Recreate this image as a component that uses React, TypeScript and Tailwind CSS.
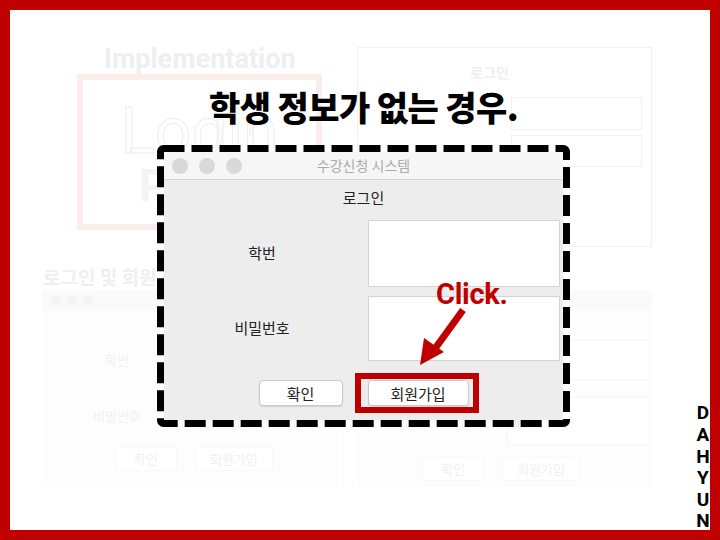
import React from "react";

const KR = "font-['Noto_Sans_CJK_KR','Noto_Sans',sans-serif]";

function FaintWindow({ variant }: { variant: "left" | "right" }) {
  return (
    <div className="flex h-full w-full flex-col bg-[#fdfdfd]">
      <div className="flex h-[20px] items-center gap-[6px] bg-[#fafafa] px-[8px]">
        <span className="h-[10px] w-[10px] rounded-full bg-[#f4f4f4]" />
        <span className="h-[10px] w-[10px] rounded-full bg-[#f4f4f4]" />
        <span className="h-[10px] w-[10px] rounded-full bg-[#f4f4f4]" />
      </div>
      {variant === "left" ? (
        <div className="flex flex-1 flex-col items-start pl-[50px] pt-[40px] text-[13px] text-[#f0f0f0]">
          <span className="ml-[12px]">학번</span>
          <span className="mt-[36px]">비밀번호</span>
          <div className="mt-[22px] ml-[22px] flex gap-[18px]">
            <span className="rounded-[3px] border border-[#f8f8f8] bg-white px-[18px] py-[1px]">확인</span>
            <span className="rounded-[3px] border border-[#f8f8f8] bg-white px-[14px] py-[1px]">회원가입</span>
          </div>
        </div>
      ) : (
        <div className="flex flex-1 flex-col items-end pr-[2px] pt-[30px] text-[13px] text-[#f0f0f0]">
          <div className="flex h-[40px] w-[143px] items-center border border-[#f6f6f6] bg-white pl-[4px]">6</div>
          <div className="mt-[17px] flex h-[48px] w-[143px] items-center border border-[#f6f6f6] bg-white pl-[4px]">●●|</div>
          <div className="mt-[12px] mr-[70px] flex gap-[18px]">
            <span className="rounded-[3px] border border-[#f8f8f8] bg-white px-[18px] py-[1px]">확인</span>
            <span className="rounded-[3px] border border-[#f8f8f8] bg-white px-[14px] py-[1px]">회원가입</span>
          </div>
        </div>
      )}
    </div>
  );
}

function Background() {
  return (
    <>
      <div className="absolute left-[94px] top-[36px] font-['Roboto',sans-serif] text-[27px] font-bold leading-none text-[#efefef]">
        Implementation
      </div>
      <div className="absolute left-[67px] top-[64px] flex h-[156px] w-[245px] flex-col items-center border-[6px] border-[#fcecec] pt-[20px]">
        <span
          className="font-['Roboto',sans-serif] text-[64px] leading-none text-white"
          style={{ WebkitTextStroke: "1px #eeeeee" }}
        >
          Login
        </span>
        <span className="self-start pl-[56px] font-['Roboto',sans-serif] text-[44px] font-bold leading-none text-[#f4f4f4]">
          P
        </span>
      </div>
      <div className={`absolute left-[347px] top-[37px] flex h-[200px] w-[295px] flex-col items-center border border-[#f1f1f1] ${KR}`}>
        <span className="mt-[14px] ml-[-30px] text-[14px] font-bold text-[#efefef]">로그인</span>
        <div className="mt-[14px] ml-[143px] h-[33px] w-[131px] border border-[#f1f1f1]" />
        <div className="mt-[5px] ml-[143px] h-[32px] w-[131px] border border-[#f1f1f1]" />
      </div>
      <div className={`absolute left-[33px] top-[253px] text-[19px] font-bold text-[#efefef] ${KR}`}>로그인 및 회원가입</div>
      <div className={`absolute left-[33px] top-[280px] h-[197px] w-[295px] ${KR}`}>
        <FaintWindow variant="left" />
      </div>
      <div className={`absolute left-[347px] top-[280px] h-[197px] w-[295px] ${KR}`}>
        <FaintWindow variant="right" />
      </div>
    </>
  );
}

function Dialog() {
  return (
    <div className={`flex h-[268px] w-[399px] flex-col bg-[#ededed] ${KR} text-[#222]`}>
      <div className="relative flex h-[28px] items-center justify-center border-b border-[#d6d6d6] bg-[#f6f6f6]">
        <div className="absolute left-[8px] flex gap-[11px]">
          <span className="h-[16px] w-[16px] rounded-full bg-[#d9d9d9]" />
          <span className="h-[16px] w-[16px] rounded-full bg-[#d9d9d9]" />
          <span className="h-[16px] w-[16px] rounded-full bg-[#d9d9d9]" />
        </div>
        <span className="text-[14px] text-[#ababab]">수강신청 시스템</span>
      </div>
      <div className="flex flex-1 flex-col">
        <div className="mt-[8px] text-center text-[15px] leading-[20px]">로그인</div>
        <div className="mt-[12px] grid grid-cols-[196px_192px] gap-x-[8px] gap-y-[9px]">
          <div className="flex items-center justify-center text-[15px]">학번</div>
          <div className="h-[67px] border border-[#d3d3d3] bg-white" />
          <div className="flex items-center justify-center text-[15px]">비밀번호</div>
          <div className="h-[65px] border border-[#d3d3d3] bg-white" />
        </div>
        <div className="mt-[19px] flex justify-center gap-[25px]">
          <button className="h-[26px] w-[84px] rounded-[4px] border border-[#c9c9c9] bg-white text-[15px] leading-none shadow-[0_1px_1px_rgba(0,0,0,0.12)]">
            확인
          </button>
          <div className="relative">
            <button className="h-[26px] w-[101px] rounded-[4px] border border-[#c9c9c9] bg-white text-[15px] leading-none shadow-[0_1px_1px_rgba(0,0,0,0.12)]">
              회원가입
            </button>
            <div className="absolute left-[-13px] top-[-7px] h-[40px] w-[124px] border-[6px] border-[#c00000]" />
          </div>
        </div>
      </div>
    </div>
  );
}

export default function App() {
  return (
    <div className="relative h-[540px] w-[720px] overflow-hidden border-[10px] border-[#c00000] bg-white">
      <Background />

      <div className={`absolute left-[147px] top-[77px] w-[413px] text-center text-[34px] font-black leading-[40px] tracking-[-0.6px] text-black ${KR}`}>
        학생 정보가 없는 경우.
      </div>

      <div className="absolute left-[147px] top-[135px] h-[282px] w-[413px]">
        <svg className="absolute inset-0" width="413" height="282" viewBox="0 0 413 282">
          <rect x="3.5" y="3.5" width="406" height="275" rx="3" fill="none" stroke="#000" strokeWidth="7" strokeDasharray="21 7" />
        </svg>
        <div className="absolute left-[7px] top-[7px]">
          <Dialog />
        </div>
      </div>

      <div className="absolute left-[426px] top-[267px] font-['Roboto',sans-serif] text-[29px] font-bold leading-[34px] tracking-[-0.3px] text-[#c00000]">
        Click.
      </div>
      <svg className="absolute left-[400px] top-[290px]" width="70" height="80" viewBox="0 0 70 80">
        <line x1="53" y1="10" x2="24" y2="50" stroke="#c00000" strokeWidth="7" />
        <polygon points="10,65 14,38 34,52" fill="#c00000" />
      </svg>

      <div className="absolute bottom-[-2px] right-0 flex w-[14px] flex-col items-center font-['Roboto',sans-serif] text-[19px] font-bold leading-[21.6px] text-black">
        <span>D</span>
        <span>A</span>
        <span>H</span>
        <span>Y</span>
        <span>U</span>
        <span>N</span>
      </div>
    </div>
  );
}
